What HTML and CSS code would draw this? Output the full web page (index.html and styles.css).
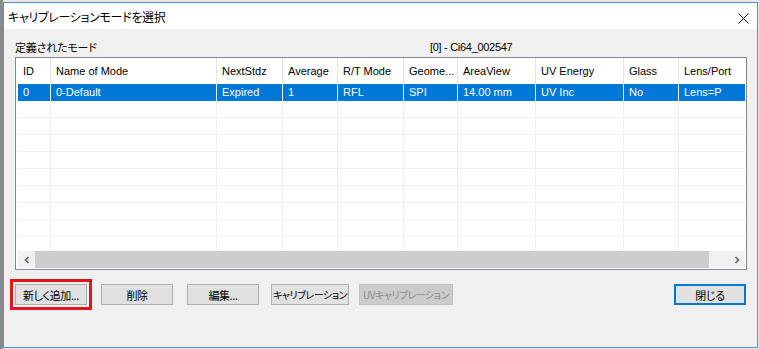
FILE: index.html
```html
<!DOCTYPE html>
<html lang="ja">
<head>
<meta charset="utf-8">
<title>キャリブレーションモードを選択</title>
<link rel="stylesheet" href="styles.css">
</head>
<body>
<div class="window">
  <div class="titlebar">
    <span class="title">キャリブレーションモードを選択</span>
    <span class="close"><svg width="11" height="11" viewBox="0 0 11 11"><path d="M0.5 0.5 L10.5 10.5 M10.5 0.5 L0.5 10.5" stroke="#111" stroke-width="1" fill="none"/></svg></span>
  </div>
  <div class="client">
    <div class="labels">
      <span class="jp">定義されたモード</span>
      <span class="device">[0] - Ci64_002547</span>
    </div>
    <div class="listbox">
      <div class="grid">
        <div class="row header">
          <div class="cell">ID</div><div class="cell">Name of Mode</div><div class="cell">NextStdz</div><div class="cell">Average</div><div class="cell">R/T Mode</div><div class="cell">Geome...</div><div class="cell">AreaView</div><div class="cell">UV Energy</div><div class="cell">Glass</div><div class="cell">Lens/Port</div>
        </div>
        <div class="row selected">
          <div class="cell">0</div><div class="cell">0-Default</div><div class="cell">Expired</div><div class="cell">1</div><div class="cell">RFL</div><div class="cell">SPI</div><div class="cell">14.00 mm</div><div class="cell">UV Inc</div><div class="cell">No</div><div class="cell">Lens=P</div>
        </div>
        <div class="row empty"><div class="cell"></div><div class="cell"></div><div class="cell"></div><div class="cell"></div><div class="cell"></div><div class="cell"></div><div class="cell"></div><div class="cell"></div><div class="cell"></div><div class="cell"></div></div>
        <div class="row empty"><div class="cell"></div><div class="cell"></div><div class="cell"></div><div class="cell"></div><div class="cell"></div><div class="cell"></div><div class="cell"></div><div class="cell"></div><div class="cell"></div><div class="cell"></div></div>
        <div class="row empty"><div class="cell"></div><div class="cell"></div><div class="cell"></div><div class="cell"></div><div class="cell"></div><div class="cell"></div><div class="cell"></div><div class="cell"></div><div class="cell"></div><div class="cell"></div></div>
        <div class="row empty"><div class="cell"></div><div class="cell"></div><div class="cell"></div><div class="cell"></div><div class="cell"></div><div class="cell"></div><div class="cell"></div><div class="cell"></div><div class="cell"></div><div class="cell"></div></div>
        <div class="row empty"><div class="cell"></div><div class="cell"></div><div class="cell"></div><div class="cell"></div><div class="cell"></div><div class="cell"></div><div class="cell"></div><div class="cell"></div><div class="cell"></div><div class="cell"></div></div>
        <div class="row empty"><div class="cell"></div><div class="cell"></div><div class="cell"></div><div class="cell"></div><div class="cell"></div><div class="cell"></div><div class="cell"></div><div class="cell"></div><div class="cell"></div><div class="cell"></div></div>
        <div class="row empty"><div class="cell"></div><div class="cell"></div><div class="cell"></div><div class="cell"></div><div class="cell"></div><div class="cell"></div><div class="cell"></div><div class="cell"></div><div class="cell"></div><div class="cell"></div></div>
        <div class="row empty"><div class="cell"></div><div class="cell"></div><div class="cell"></div><div class="cell"></div><div class="cell"></div><div class="cell"></div><div class="cell"></div><div class="cell"></div><div class="cell"></div><div class="cell"></div></div>
        <div class="row empty"><div class="cell"></div><div class="cell"></div><div class="cell"></div><div class="cell"></div><div class="cell"></div><div class="cell"></div><div class="cell"></div><div class="cell"></div><div class="cell"></div><div class="cell"></div></div>
      </div>
      <div class="hscroll">
        <span class="arrow"><svg width="8" height="8" viewBox="0 0 8 8"><path d="M5.5 1 L2.5 4 L5.5 7" stroke="#606060" stroke-width="1.6" fill="none"/></svg></span>
        <span class="track"><span class="thumb"></span></span>
        <span class="arrow"><svg width="8" height="8" viewBox="0 0 8 8"><path d="M2.5 1 L5.5 4 L2.5 7" stroke="#606060" stroke-width="1.6" fill="none"/></svg></span>
      </div>
    </div>
    <div class="buttons">
      <span class="highlight"><button class="btn">新しく追加...</button></span>
      <button class="btn gap14">削除</button>
      <button class="btn gap14">編集...</button>
      <button class="btn wide gap12">キャリブレーション</button>
      <button class="btn wider gap10 disabled">UVキャリブレーション</button>
      <span class="spacer"></span>
      <button class="btn default">閉じる</button>
    </div>
  </div>
</div>
</body>
</html>
```

FILE: styles.css
```css
html, body {
  margin: 0;
  padding: 0;
}
body {
  width: 759px;
  height: 349px;
  overflow: hidden;
  background: linear-gradient(to right, #8a8a8a 0, #8a8a8a 3px, #e8e8e8 3px);
  font-family: "Noto Sans CJK JP", "Liberation Sans", sans-serif;
  font-feature-settings: "palt";
  font-size: 12px;
  color: #000;
  padding-top: 2px;
  box-sizing: border-box;
}
.window {
  margin-left: 3px;
  width: 755px;
  height: 346px;
  box-sizing: border-box;
  border: 1px solid #5d8fc4;
  background: #f0f0f0;
  display: flex;
  flex-direction: column;
}
.titlebar {
  height: 26px;
  background: #fff;
  display: flex;
  align-items: center;
  padding-left: 4px;
  padding-right: 8px;
}
.title {
  flex: 1;
  font-size: 12px;
  letter-spacing: -0.3px;
  line-height: 14px;
  padding-top: 1px;
}
.close {
  display: flex;
  width: 11px;
  height: 11px;
  margin-top: 4px;
}
.client {
  flex: 1;
  padding: 11px 9px 0 11px;
}
.labels {
  height: 14px;
  line-height: 14px;
  margin-bottom: 3px;
  display: flex;
  font-size: 11px;
}
.labels .jp {
  width: 415px;
  letter-spacing: -0.2px;
}
.device {
  font-family: "Liberation Sans", sans-serif;
  font-size: 11px;
  letter-spacing: -0.3px;
}
.listbox {
  width: 732px;
  height: 213px;
  box-sizing: border-box;
  border: 1px solid #828790;
  padding: 0 1px 1px 2px;
  background: #fff;
  display: flex;
  flex-direction: column;
}
.grid {
  height: 193px;
  overflow: hidden;
  font-family: "Liberation Sans", sans-serif;
  font-size: 11px;
}
.row {
  display: grid;
  grid-template-columns: 33px 166px 66px 55px 66px 54px 78px 88px 55px 100px;
  width: 761px;
}
.cell {
  box-sizing: border-box;
  padding-left: 5px;
  border-right: 1px solid #f0f0f0;
  white-space: nowrap;
  overflow: hidden;
}
.header {
  height: 26px;
  line-height: 27px;
}
.header .cell {
  border-right-color: #e5e5e5;
}
.selected {
  height: 17px;
  line-height: 17px;
  background: #0078d7;
  color: #fff;
}
.selected .cell {
  border-right-color: #e8f1fa;
}
.empty {
  height: 17px;
}
.empty .cell {
  border-bottom: 1px solid #f0f0f0;
}
.hscroll {
  height: 17px;
  display: flex;
  background: #f0f0f0;
}
.arrow {
  width: 17px;
  height: 17px;
  display: flex;
  align-items: center;
  justify-content: center;
}
.track {
  flex: 1;
  display: flex;
  padding: 0 19px 0 0;
}
.thumb {
  flex: 1;
  background: #cdcdcd;
}
.buttons {
  margin-top: 14px;
  display: flex;
  align-items: flex-start;
  padding-right: 2px;
}
.highlight {
  display: flex;
  outline: 3px solid #e3141c;
  outline-offset: 2px;
}
.btn {
  width: 72px;
  height: 21px;
  box-sizing: border-box;
  margin: 0;
  padding: 0;
  background: #e1e1e1;
  border: 1px solid #adadad;
  font-family: "Noto Sans CJK JP", "Liberation Sans", sans-serif;
  font-feature-settings: "palt";
  font-size: 11px;
  color: #000;
  line-height: 18px;
  letter-spacing: -0.4px;
  white-space: nowrap;
  overflow: hidden;
}
.gap14 { margin-left: 14px; }
.gap12 { margin-left: 12px; }
.gap10 { margin-left: 10px; }
.wide { width: 78px; font-size: 10px; letter-spacing: -0.5px; }
.wider { width: 94px; font-size: 10px; letter-spacing: -0.5px; }
.disabled {
  background: #cccccc;
  border-color: #bfbfbf;
  color: #8a8a8a;
}
.spacer { flex: 1; }
.default {
  border: 2px solid #0078d7;
}
```
